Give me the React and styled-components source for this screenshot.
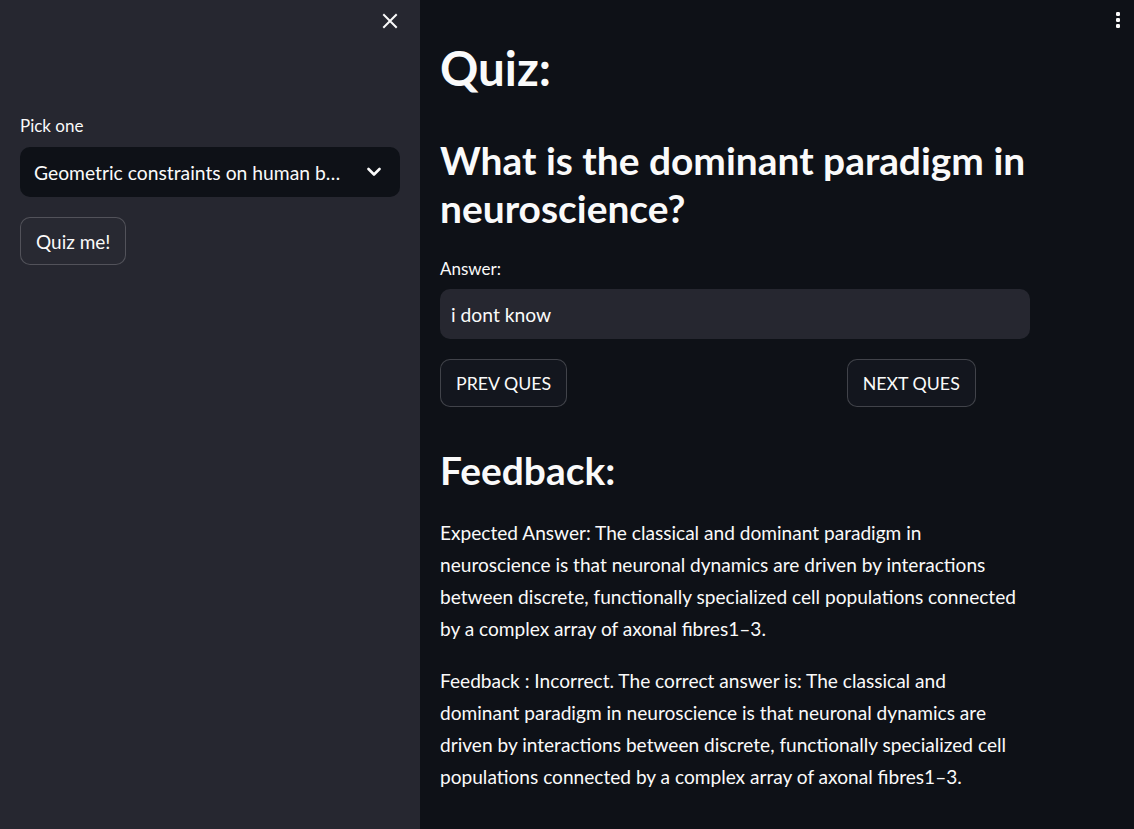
import React from "react";
import styled, { createGlobalStyle } from "styled-components";

const GlobalStyle = createGlobalStyle`
  html, body { margin: 0; padding: 0; }
  body {
    background: #0e1117;
    color: #fafafa;
    font-family: "Source Sans Pro", Lato, "Noto Sans", sans-serif;
    -webkit-font-smoothing: antialiased;
  }
  * { box-sizing: border-box; }
`;

const Shell = styled.div`
  display: flex;
  min-height: 829px;
`;

const Sidebar = styled.aside`
  width: 420px;
  flex: none;
  background: #262730;
  padding: 5px 20px 0 20px;
  display: flex;
  flex-direction: column;
`;

const SidebarHeader = styled.div`
  display: flex;
  justify-content: flex-end;
  margin-right: -6px;
`;

const IconButton = styled.button`
  width: 32px;
  height: 32px;
  padding: 0;
  border: none;
  background: transparent;
  color: #fafafa;
  display: flex;
  align-items: center;
  justify-content: center;
  cursor: pointer;
`;

const SidebarBody = styled.div`
  padding-top: 78px;
  display: flex;
  flex-direction: column;
`;

const Label = styled.label`
  display: block;
  font-size: 17px;
  line-height: 22px;
  color: #fafafa;
  margin-bottom: ${(p) => p.$gap || 10}px;
`;

const Select = styled.div`
  height: 50px;
  border-radius: 10px;
  background: #0e1117;
  display: flex;
  align-items: center;
  padding: 0 19px 0 14px;
  font-size: 19.3px;
  color: #fafafa;
`;

const SelectValue = styled.span`
  flex: 1;
  white-space: nowrap;
  overflow: hidden;
`;

const Button = styled.button`
  height: 48px;
  padding: 0 15px;
  border-radius: 10px;
  border: 1px solid rgba(250, 250, 250, 0.2);
  background: ${(p) => (p.$onSidebar ? "#282932" : "#13161e")};
  color: #fafafa;
  font-family: inherit;
  font-size: ${(p) => p.$size || 19}px;
  cursor: pointer;
  justify-self: start;
  align-self: flex-start;
`;

const Main = styled.main`
  flex: 1;
  display: flex;
  padding-left: 20px;
`;

const Content = styled.section`
  width: 590px;
  flex: none;
  padding-top: 40px;
  display: flex;
  flex-direction: column;
`;

const Toolbar = styled.div`
  flex: 1;
  display: flex;
  justify-content: flex-end;
  padding: 4px 0 0 0;
`;

const MenuButton = styled(IconButton)`
  width: 32px;
  height: 32px;
`;

const H1 = styled.h1`
  margin: 0;
  font-size: 47.5px;
  line-height: 56px;
  font-weight: 700;
`;

const H2 = styled.h2`
  margin: ${(p) => p.$top}px 0 0 0;
  font-size: 38.9px;
  line-height: 48px;
  font-weight: 700;
`;

const Field = styled.div`
  margin-top: ${(p) => p.$top}px;
`;

const Input = styled.div`
  height: 50px;
  border-radius: 10px;
  background: #262730;
  display: flex;
  align-items: center;
  padding: 0 11px;
  font-size: 19.3px;
`;

const Columns = styled.div`
  margin-top: 20px;
  display: grid;
  grid-template-columns: repeat(3, 1fr);
  gap: 20px;
`;

const Paragraph = styled.p`
  margin: ${(p) => p.$top}px 0 0 0;
  max-width: 584px;
  font-size: 19.1px;
  line-height: 32px;
`;

const CloseIcon = () => (
  <svg width="16" height="16" viewBox="0 0 16 16" fill="none">
    <path d="M2 2L14 14M14 2L2 14" stroke="#fafafa" strokeWidth="2" strokeLinecap="square" />
  </svg>
);

const Chevron = () => (
  <svg width="14" height="10" viewBox="0 0 14 10" fill="none">
    <path d="M1.5 2L7 7.5L12.5 2" stroke="#fafafa" strokeWidth="2.6" strokeLinecap="round" strokeLinejoin="round" />
  </svg>
);

const Kebab = () => (
  <svg width="4" height="16" viewBox="0 0 4 16">
    <rect x="0" y="0" width="4" height="4" rx="1.2" fill="#fafafa" />
    <rect x="0" y="6" width="4" height="4" rx="1.2" fill="#fafafa" />
    <rect x="0" y="12" width="4" height="4" rx="1.2" fill="#fafafa" />
  </svg>
);

export default function App() {
  return (
    <>
      <GlobalStyle />
      <Shell>
        <Sidebar>
          <SidebarHeader>
            <IconButton aria-label="Close sidebar">
              <CloseIcon />
            </IconButton>
          </SidebarHeader>
          <SidebarBody>
            <Label>Pick one</Label>
            <Select>
              <SelectValue>Geometric constraints on human b…</SelectValue>
              <Chevron />
            </Select>
            <Field $top={20}>
              <Button $onSidebar>Quiz me!</Button>
            </Field>
          </SidebarBody>
        </Sidebar>
        <Main>
          <Content>
            <H1>Quiz:</H1>
            <H2 $top={40}>What is the dominant paradigm in neuroscience?</H2>
            <Field $top={26}>
              <Label $gap={9}>Answer:</Label>
              <Input>i dont know</Input>
            </Field>
            <Columns>
              <Button $size={17.8}>PREV QUES</Button>
              <div />
              <Button $size={17.8}>NEXT QUES</Button>
            </Columns>
            <H2 $top={39}>Feedback:</H2>
            <Paragraph $top={23}>
              Expected Answer: The classical and dominant paradigm in neuroscience is that neuronal dynamics are driven by
              interactions between discrete, functionally specialized cell populations connected by a complex array of
              axonal fibres1–3.
            </Paragraph>
            <Paragraph $top={20}>
              Feedback : Incorrect. The correct answer is: The classical and dominant paradigm in neuroscience is that
              neuronal dynamics are driven by interactions between discrete, functionally specialized cell populations
              connected by a complex array of axonal fibres1–3.
            </Paragraph>
          </Content>
          <Toolbar>
            <MenuButton aria-label="Main menu">
              <Kebab />
            </MenuButton>
          </Toolbar>
        </Main>
      </Shell>
    </>
  );
}
